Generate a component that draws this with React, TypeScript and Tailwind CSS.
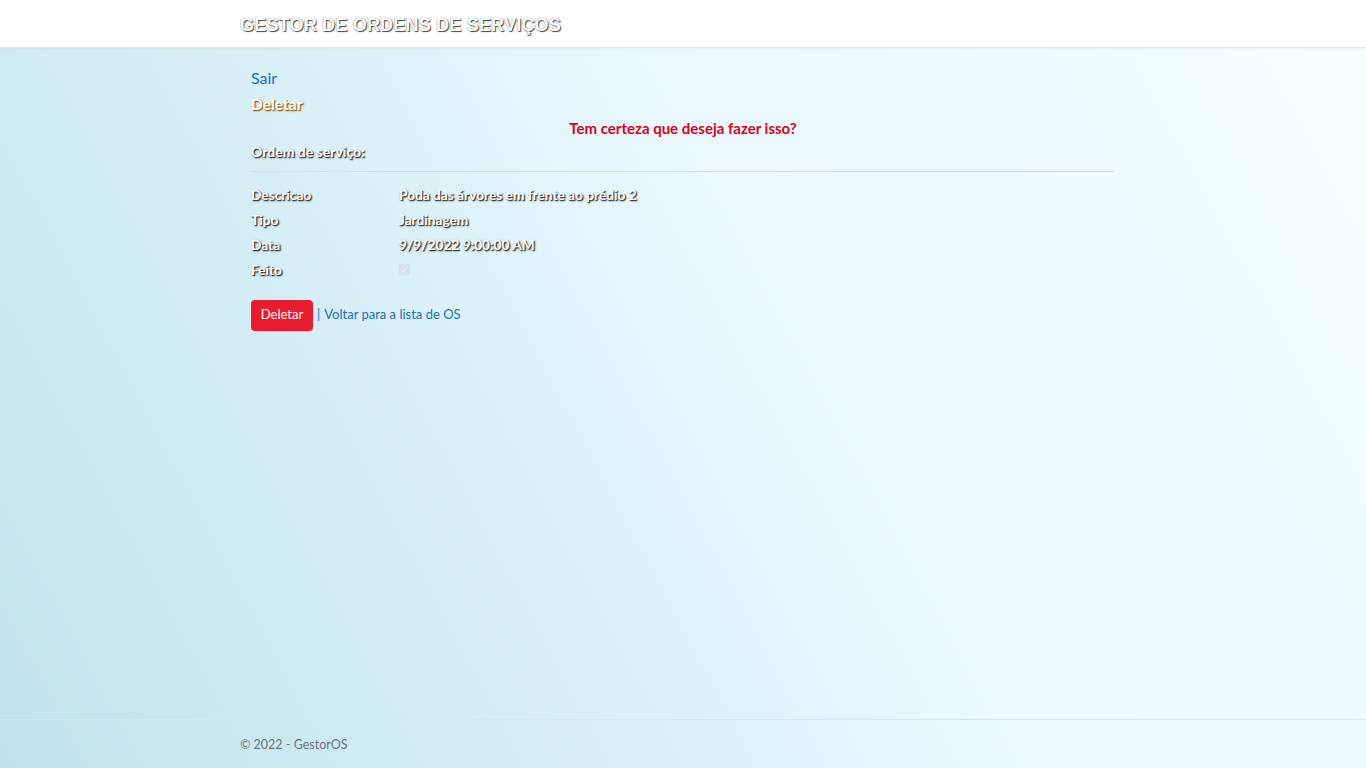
export default function App() {
  const rows: [string, React.ReactNode][] = [
    ["Descricao", "Poda das árvores em frente ao prédio 2"],
    ["Tipo", "Jardinagem"],
    ["Data", "9/9/2022 9:00:00 AM"],
    [
      "Feito",
      <input
        type="checkbox"
        disabled
        checked
        readOnly
        className="h-[11px] w-[11px] opacity-40"
      />,
    ],
  ];

  const shadow = "[text-shadow:1px_1px_1px_#333,1px_1px_2px_#555]";

  return (
    <div className="flex min-h-[768px] flex-col bg-[linear-gradient(62deg,#c2e3ee_0%,#d6eff7_33%,#eafafe_58%,#f5fdff_100%)] font-['Lato','Open_Sans',sans-serif]">
      {/* Header */}
      <header className="h-12 border-b border-[#e2e6ea] bg-white shadow-[0_1px_3px_rgba(0,0,0,0.05)]">
        <div className="mx-auto flex h-full w-[886px] items-center pt-[3px]">
          <span className="font-['Liberation_Sans',Arial,sans-serif] text-[18px] font-bold tracking-[0.2px] text-white [text-shadow:1px_1px_1px_#444,0_0_1px_#666]">
            GESTOR DE ORDENS DE SERVIÇOS
          </span>
        </div>
      </header>

      {/* Main */}
      <main className="mx-auto w-[864px] flex-1 pt-[19px] text-[13px]">
        <a className="text-[16px] leading-[22px] text-[#1b6ec2]">Sair</a>
        <h4 className="mt-[4px] text-[15.5px] font-bold leading-[20px] text-white [text-shadow:1px_1px_1px_#8a5a1a,1px_1px_2px_#c08a3a]">
          Deletar
        </h4>
        <h3 className="mt-[4px] text-center text-[15px] font-bold leading-[20px] text-[#e0001b]">
          Tem certeza que deseja fazer isso?
        </h3>
        <h4 className={`mt-[4px] text-[14px] font-bold leading-[20px] text-white ${shadow}`}>
          Ordem de serviço:
        </h4>
        <hr className="mt-[9px] border-[#d8dde0]" />
        <dl className="mt-[13px] grid grid-cols-[148px_1fr] gap-y-[5px] text-[13.7px] font-bold leading-[20px] text-white">
          {rows.map(([k, v]) => (
            <div key={k} className="contents">
              <dt className={shadow}>{k}</dt>
              <dd className={`flex items-center ${shadow}`}>{v}</dd>
            </div>
          ))}
        </dl>
        <div className="mt-[20px] flex items-center gap-[4px] text-[13px]">
          <button className="h-[31px] w-[62px] rounded-[4px] bg-[#e81c2e] text-white">
            Deletar
          </button>
          <span className="text-[#1b6ec2]">|</span>
          <a className="text-[#1b6ec2]">Voltar para a lista de OS</a>
        </div>
      </main>

      {/* Footer */}
      <footer className="h-[49px] border-t border-[#d5e8ee]">
        <div className="mx-auto flex h-full w-[886px] items-center pt-[2px] text-[12.5px] text-[#6c757d]">
          © 2022 - GestorOS
        </div>
      </footer>
    </div>
  );
}
